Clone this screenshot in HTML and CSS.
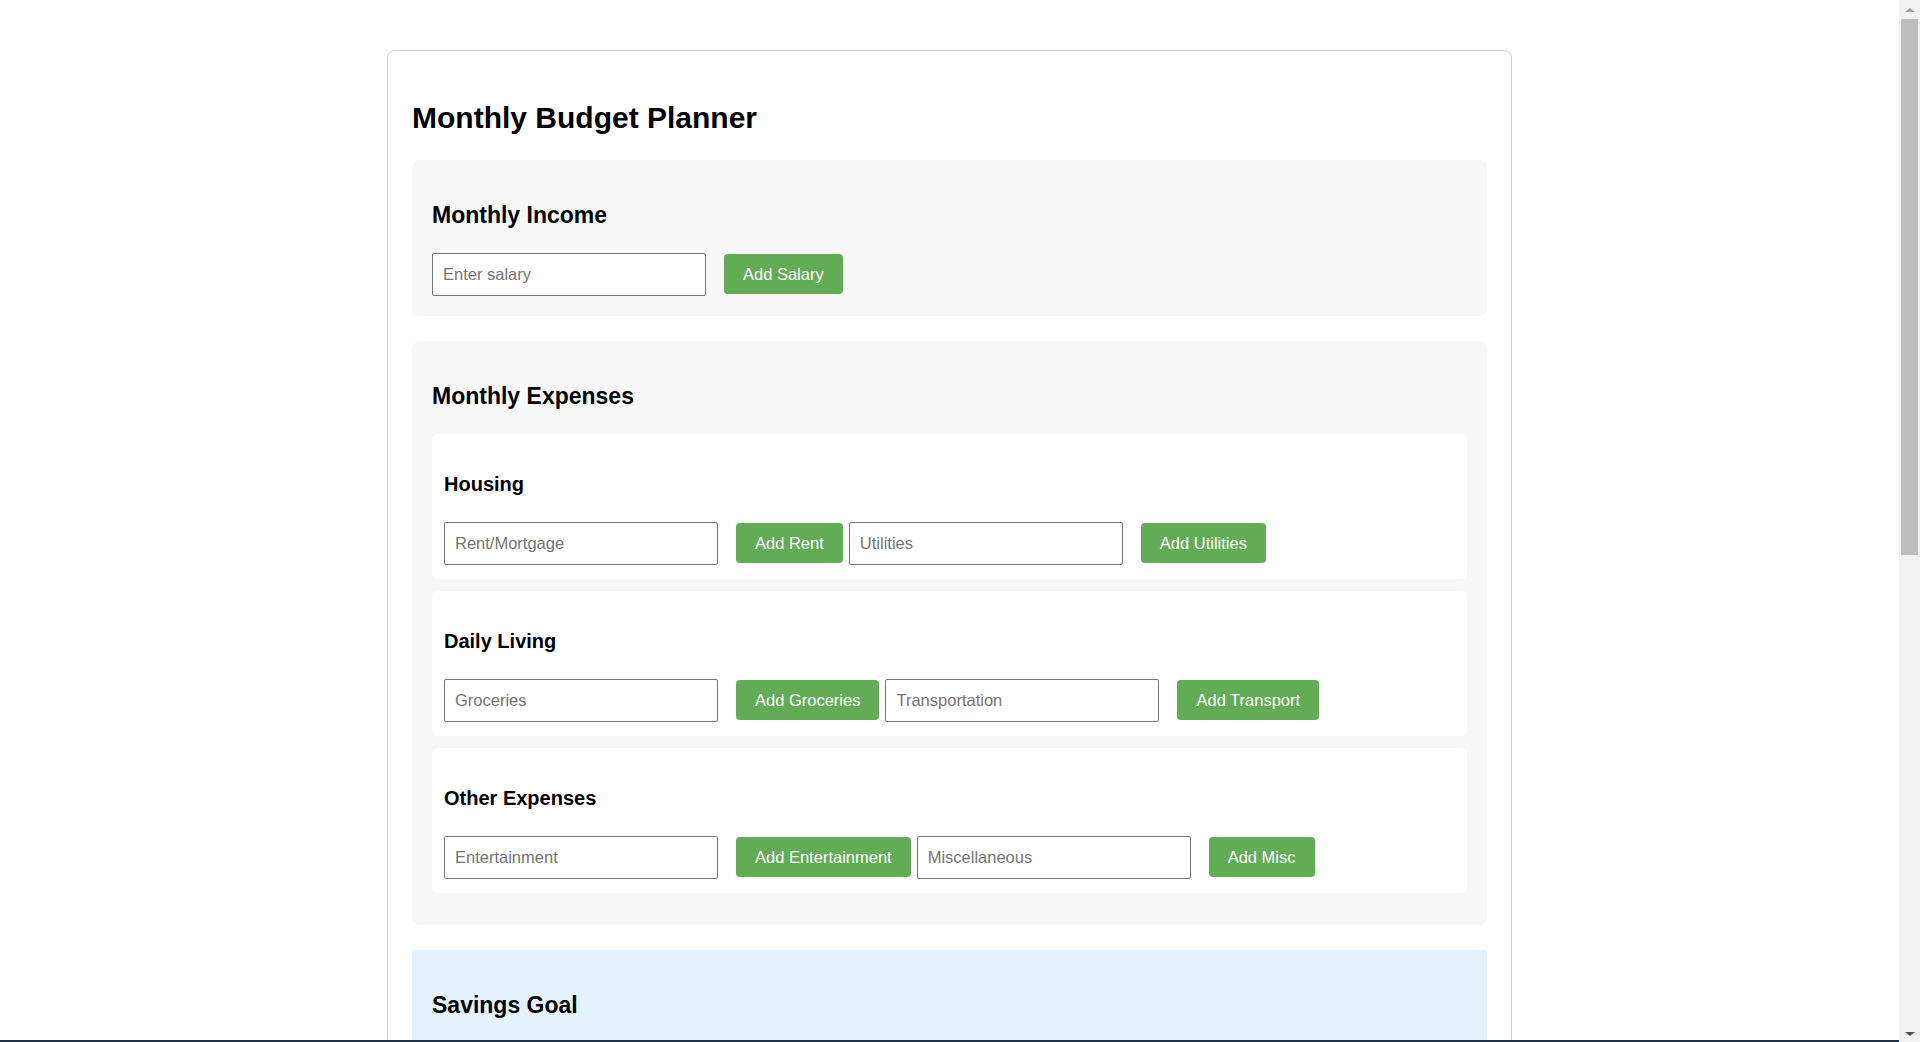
FILE: index.html
```html
<!DOCTYPE html>
<html lang="en">
<head>
<meta charset="utf-8">
<title>Monthly Budget Planner</title>
<link rel="stylesheet" href="styles.css">
</head>
<body>
<div class="container">
  <h1>Monthly Budget Planner</h1>

  <section class="section">
    <h2>Monthly Income</h2>
    <div class="row">
      <input class="field" type="number" placeholder="Enter salary">
      <button class="btn">Add Salary</button>
    </div>
  </section>

  <section class="section">
    <h2>Monthly Expenses</h2>

    <div class="card">
      <h3>Housing</h3>
      <div class="row">
        <input class="field" type="number" placeholder="Rent/Mortgage">
        <button class="btn">Add Rent</button>
        <input class="field" type="number" placeholder="Utilities">
        <button class="btn">Add Utilities</button>
      </div>
    </div>

    <div class="card">
      <h3>Daily Living</h3>
      <div class="row">
        <input class="field" type="number" placeholder="Groceries">
        <button class="btn">Add Groceries</button>
        <input class="field" type="number" placeholder="Transportation">
        <button class="btn">Add Transport</button>
      </div>
    </div>

    <div class="card">
      <h3>Other Expenses</h3>
      <div class="row">
        <input class="field" type="number" placeholder="Entertainment">
        <button class="btn">Add Entertainment</button>
        <input class="field" type="number" placeholder="Miscellaneous">
        <button class="btn">Add Misc</button>
      </div>
    </div>
  </section>

  <section class="section savings">
    <h2>Savings Goal</h2>
    <div class="row">
      <input class="field" type="number" placeholder="Enter savings goal">
      <button class="btn">Set Goal</button>
    </div>
  </section>

  <section class="section">
    <h2>Budget Summary</h2>
    <div class="summary">
      <div class="summary-row"><span>Total Income:</span><span>$0.00</span></div>
      <div class="summary-row"><span>Total Expenses:</span><span>$0.00</span></div>
      <div class="summary-row"><span>Savings Goal:</span><span>$0.00</span></div>
      <div class="summary-row"><span>Remaining Balance:</span><span>$0.00</span></div>
    </div>
  </section>

  <section class="section">
    <h2>Expense Breakdown</h2>
    <div class="chart"></div>
  </section>
</div>

<div class="screen-edge"></div>

<div class="scrollbar" aria-hidden="true">
  <div class="sb-button sb-up"><span class="arrow-up"></span></div>
  <div class="sb-track"><div class="sb-thumb"></div></div>
  <div class="sb-button sb-down"><span class="arrow-down"></span></div>
</div>
</body>
</html>
```

FILE: styles.css
```css
html {
  background: #fff;
}

body {
  margin: 8px 29px 8px 8px;
  font-family: "Liberation Sans", Arial, sans-serif;
  color: #000;
  background: #fff;
}

::-webkit-scrollbar {
  display: none;
}

.container {
  width: 1125px;
  box-sizing: border-box;
  margin: 42px auto 0;
  padding: 24px;
  border: 1px solid #cfcfcf;
  border-radius: 8px;
  background: #fff;
}

h1 {
  font-size: 30px;
  font-weight: bold;
  margin: 26px 0 24.5px;
}

.section {
  background: #f8f8f8;
  border-radius: 8px;
  padding: 20px;
  margin-bottom: 25px;
}

.section.savings {
  background: #e3f2fd;
  border-radius: 0;
}

h2 {
  font-size: 23px;
  font-weight: bold;
  margin: 22px 0 24px;
}

.card {
  background: #fff;
  border-radius: 6px;
  padding: 12px 12px 14px;
  margin-bottom: 12px;
}

h3 {
  font-size: 20px;
  font-weight: bold;
  margin: 27px 0 26px;
}

.row {
  display: flex;
  align-items: center;
}

.field {
  box-sizing: border-box;
  width: 274px;
  height: 43px;
  padding: 0 10px;
  border: 1px solid #767676;
  border-radius: 2px;
  font-family: "Liberation Sans", Arial, sans-serif;
  font-size: 16.5px;
  color: #000;
  background: #fff;
  margin: 0 18px 0 0;
  outline: none;
}

.field::placeholder {
  color: #757575;
}

.field::-webkit-outer-spin-button,
.field::-webkit-inner-spin-button {
  -webkit-appearance: none;
  margin: 0;
}

.btn {
  box-sizing: border-box;
  height: 40px;
  padding: 0 19px;
  border: none;
  border-radius: 4px;
  background: #62ac55;
  color: #fff;
  font-family: "Liberation Sans", Arial, sans-serif;
  font-size: 16.5px;
  cursor: pointer;
  margin: 0 6px 0 0;
}

.summary {
  display: flex;
  flex-direction: column;
}

.summary-row {
  height: 30px;
  display: flex;
  align-items: center;
  gap: 8px;
  font-size: 16px;
}

.chart {
  height: 400px;
  background: #fff;
  border-radius: 6px;
}

.screen-edge {
  position: fixed;
  left: 0;
  right: 21px;
  bottom: 0;
  height: 2px;
  background: #1f3447;
}

/* Browser scrollbar as it appears in the capture */
.scrollbar {
  position: fixed;
  top: 0;
  right: 0;
  bottom: 0;
  width: 21px;
  background: #f1f1f1;
  display: flex;
  flex-direction: column;
}

.sb-button {
  height: 17px;
  flex: none;
  display: flex;
  align-items: center;
  justify-content: center;
}

.sb-track {
  flex: 1;
  padding: 2px 2px 0;
}

.sb-thumb {
  height: 536px;
  background: #bdbdbd;
}

.arrow-up {
  width: 0;
  height: 0;
  border-left: 5px solid transparent;
  border-right: 5px solid transparent;
  border-bottom: 4px solid #a3a3a3;
  margin-top: 2px;
}

.arrow-down {
  width: 0;
  height: 0;
  border-left: 5px solid transparent;
  border-right: 5px solid transparent;
  border-top: 4px solid #505050;
}
```
